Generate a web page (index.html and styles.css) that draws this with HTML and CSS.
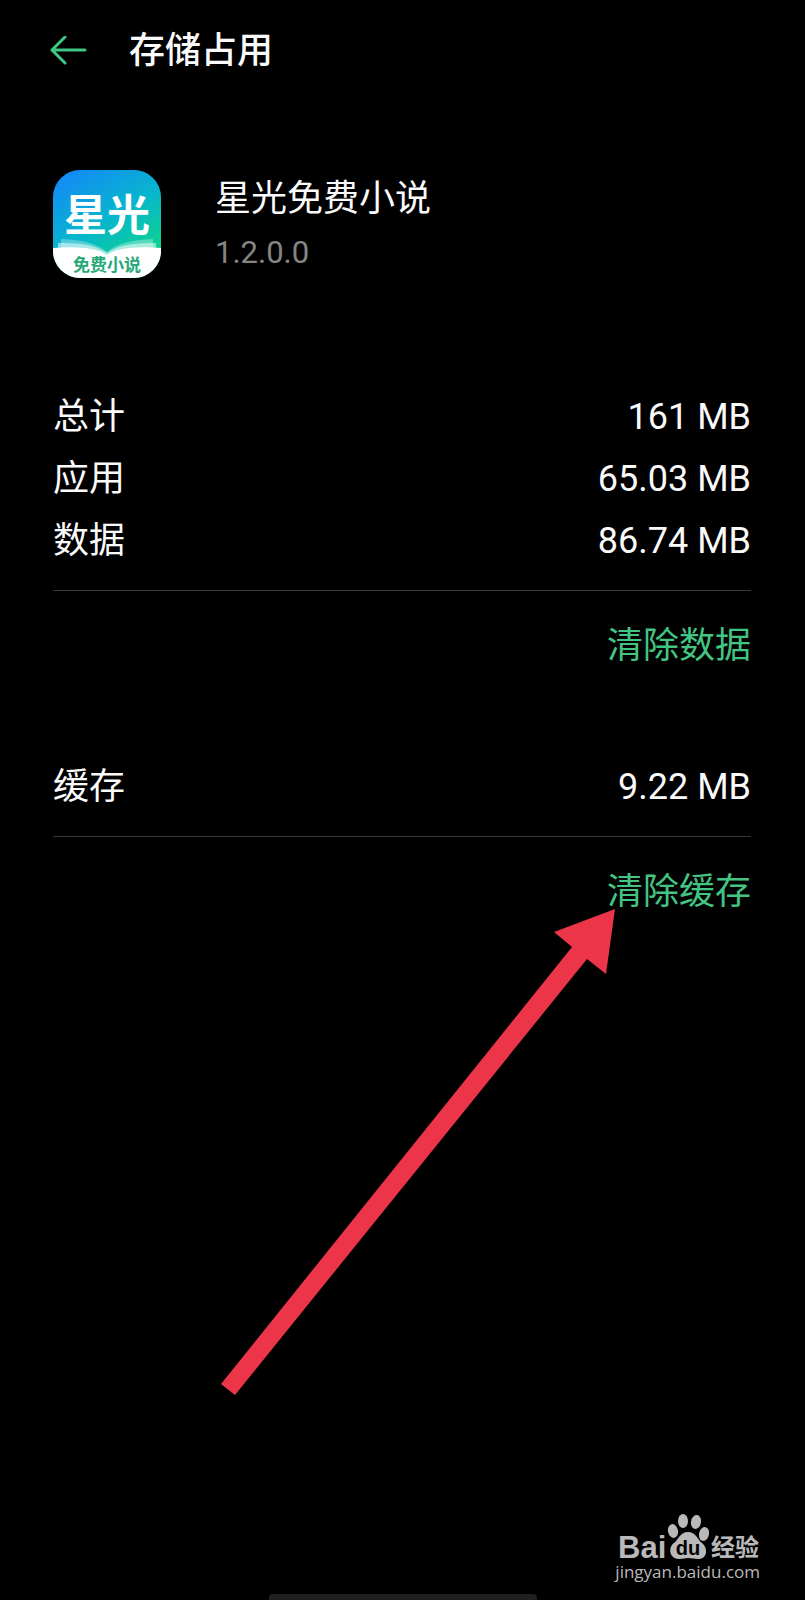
FILE: index.html
```html
<!DOCTYPE html>
<html lang="zh-CN">
<head>
<meta charset="utf-8">
<meta name="viewport" content="width=device-width, initial-scale=1">
<title>存储占用</title>
<link rel="stylesheet" href="styles.css">
</head>
<body>
<div class="screen">
  <header class="topbar">
    <button class="back" type="button" aria-label="返回">
      <svg viewBox="0 0 38 30" width="38" height="30" aria-hidden="true"><path d="M36 14H3M16 1L3 14L16 27"/></svg>
    </button>
    <h1 class="title">存储占用</h1>
  </header>

  <main class="content">
    <section class="app">
      <svg class="app-icon" viewBox="0 0 108 108" role="img" aria-label="星光免费小说">
        <defs>
          <linearGradient id="sky" x1="0.2" y1="0" x2="0.75" y2="0.9">
            <stop offset="0" stop-color="#138cf4"/>
            <stop offset="0.5" stop-color="#08b4cf"/>
            <stop offset="1" stop-color="#0bd58b"/>
          </linearGradient>
          <clipPath id="tile"><rect width="108" height="108" rx="27"/></clipPath>
        </defs>
        <g clip-path="url(#tile)">
          <rect width="108" height="108" fill="url(#sky)"/>
          <path d="M8 69Q40 70 54 82Q68 70 100 69V90H8Z" fill="#fff" opacity=".3"/>
          <path d="M5 73Q40 72 54 83Q68 72 103 73V90H5Z" fill="#fff" opacity=".5"/>
          <path d="M0 78Q40 75 54 85Q68 75 108 78V108H0Z" fill="#fff"/>
        </g>
        <text class="icon-name" x="54" y="61" text-anchor="middle">星光</text>
        <text class="icon-sub" x="54" y="101" text-anchor="middle">免费小说</text>
      </svg>
      <div class="app-text">
        <h2 class="app-name">星光免费小说</h2>
        <p class="version">1.2.0.0</p>
      </div>
    </section>

    <section class="group">
      <dl class="rows">
        <div class="row"><dt>总计</dt><dd>161 MB</dd></div>
        <div class="row"><dt>应用</dt><dd>65.03 MB</dd></div>
        <div class="row"><dt>数据</dt><dd>86.74 MB</dd></div>
      </dl>
      <button class="action" type="button">清除数据</button>
    </section>

    <section class="group">
      <dl class="rows">
        <div class="row"><dt>缓存</dt><dd>9.22 MB</dd></div>
      </dl>
      <div class="action-wrap">
        <button class="action" type="button">清除缓存</button>
        <svg class="pointer" viewBox="0 0 394 486" width="394" height="486" aria-hidden="true"><path d="M394 0L385 65L366 50L14 486L0 475L351 38L333 23Z"/></svg>
      </div>
    </section>
  </main>

  <footer class="footer">
    <div class="brand">
      <svg class="brand-logo" viewBox="0 0 142 46" width="142" height="46" role="img" aria-label="Baidu 经验">
        <g>
          <ellipse cx="55" cy="17" rx="5" ry="7" transform="rotate(-12 55 17)"/>
          <ellipse cx="65" cy="7" rx="5" ry="7"/>
          <ellipse cx="78" cy="8" rx="5" ry="7" transform="rotate(10 78 8)"/>
          <ellipse cx="86" cy="20" rx="5" ry="7" transform="rotate(14 86 20)"/>
          <path d="M70 18C62 18 61 25 56 29C50 33 51 45 61 45C65 45 67 44 70 44C74 44 76 45 80 45C90 45 90 34 84 29C79 25 78 18 70 18Z"/>
        </g>
        <text class="brand-bai" x="0" y="44">Bai</text>
        <text class="brand-du" x="70" y="41" text-anchor="middle">du</text>
        <text class="brand-cn" x="93" y="42">经验</text>
      </svg>
      <span class="brand-url">jingyan.baidu.com</span>
    </div>
    <div class="home-bar"></div>
  </footer>
</div>
</body>
</html>
```
FILE: styles.css
```css
* { box-sizing: border-box; }

body {
  margin: 0;
  background: #000;
  color: #fafafa;
  font-family: Roboto, "Noto Sans CJK SC", sans-serif;
  font-size: 36px;
  line-height: 62px;
}

h1, h2, p, dl, dd { margin: 0; }

.screen {
  display: flex;
  flex-direction: column;
  min-height: 100vh;
  overflow: hidden;
}

.topbar {
  display: flex;
  align-items: center;
  gap: 42px;
  padding: 20px 49px 0;
}

.back {
  display: flex;
  padding: 0;
  border: 0;
  background: none;
}

.back path {
  fill: none;
  stroke: #3fc682;
  stroke-width: 3;
  stroke-linecap: round;
  stroke-linejoin: round;
}

.title {
  font-size: 36px;
  font-weight: 500;
}

.content {
  flex: 1;
  padding: 88px 54px 0 53px;
}

.app {
  display: flex;
  gap: 54px;
  margin-bottom: 108px;
}

.app-icon {
  width: 108px;
  height: 108px;
}

.icon-name {
  fill: #fff;
  font-size: 43px;
  font-weight: 700;
}

.icon-sub {
  fill: #27a877;
  font-size: 17px;
  font-weight: 700;
}

.app-name {
  font-size: 36px;
  font-weight: 400;
  line-height: 58px;
}

.version {
  color: #858585;
  font-size: 31px;
  line-height: 50px;
}

.group { margin-bottom: 79px; }

.rows {
  padding-bottom: 18px;
  border-bottom: 1px solid #383838;
}

.row {
  display: flex;
  justify-content: space-between;
}

.action {
  display: block;
  margin: 24px 0 0 auto;
  padding: 0;
  border: 0;
  background: none;
  color: #42c583;
  font: inherit;
}

.action-wrap { position: relative; }

.pointer {
  position: absolute;
  top: 48px;
  right: 136px;
  fill: #ec3548;
}

.footer {
  display: flex;
  flex-direction: column;
  gap: 12px;
}

.brand {
  display: flex;
  flex-direction: column;
  align-items: flex-end;
  align-self: flex-end;
  gap: 2px;
  margin-right: 45px;
  color: #b9b9b9;
}

.brand-logo {
  fill: #b9b9b9;
  overflow: visible;
}

.brand-bai {
  font: 700 31px "Liberation Sans", sans-serif;
}

.brand-du {
  fill: #000;
  font: 700 20px "Liberation Sans", sans-serif;
}

.brand-cn {
  font-size: 24px;
  font-weight: 700;
}

.brand-url {
  font-family: "Open Sans", sans-serif;
  font-size: 17px;
  line-height: 20px;
}

.home-bar {
  align-self: center;
  width: 268px;
  height: 6px;
  border-radius: 4px 4px 0 0;
  background: #202020;
}
```
